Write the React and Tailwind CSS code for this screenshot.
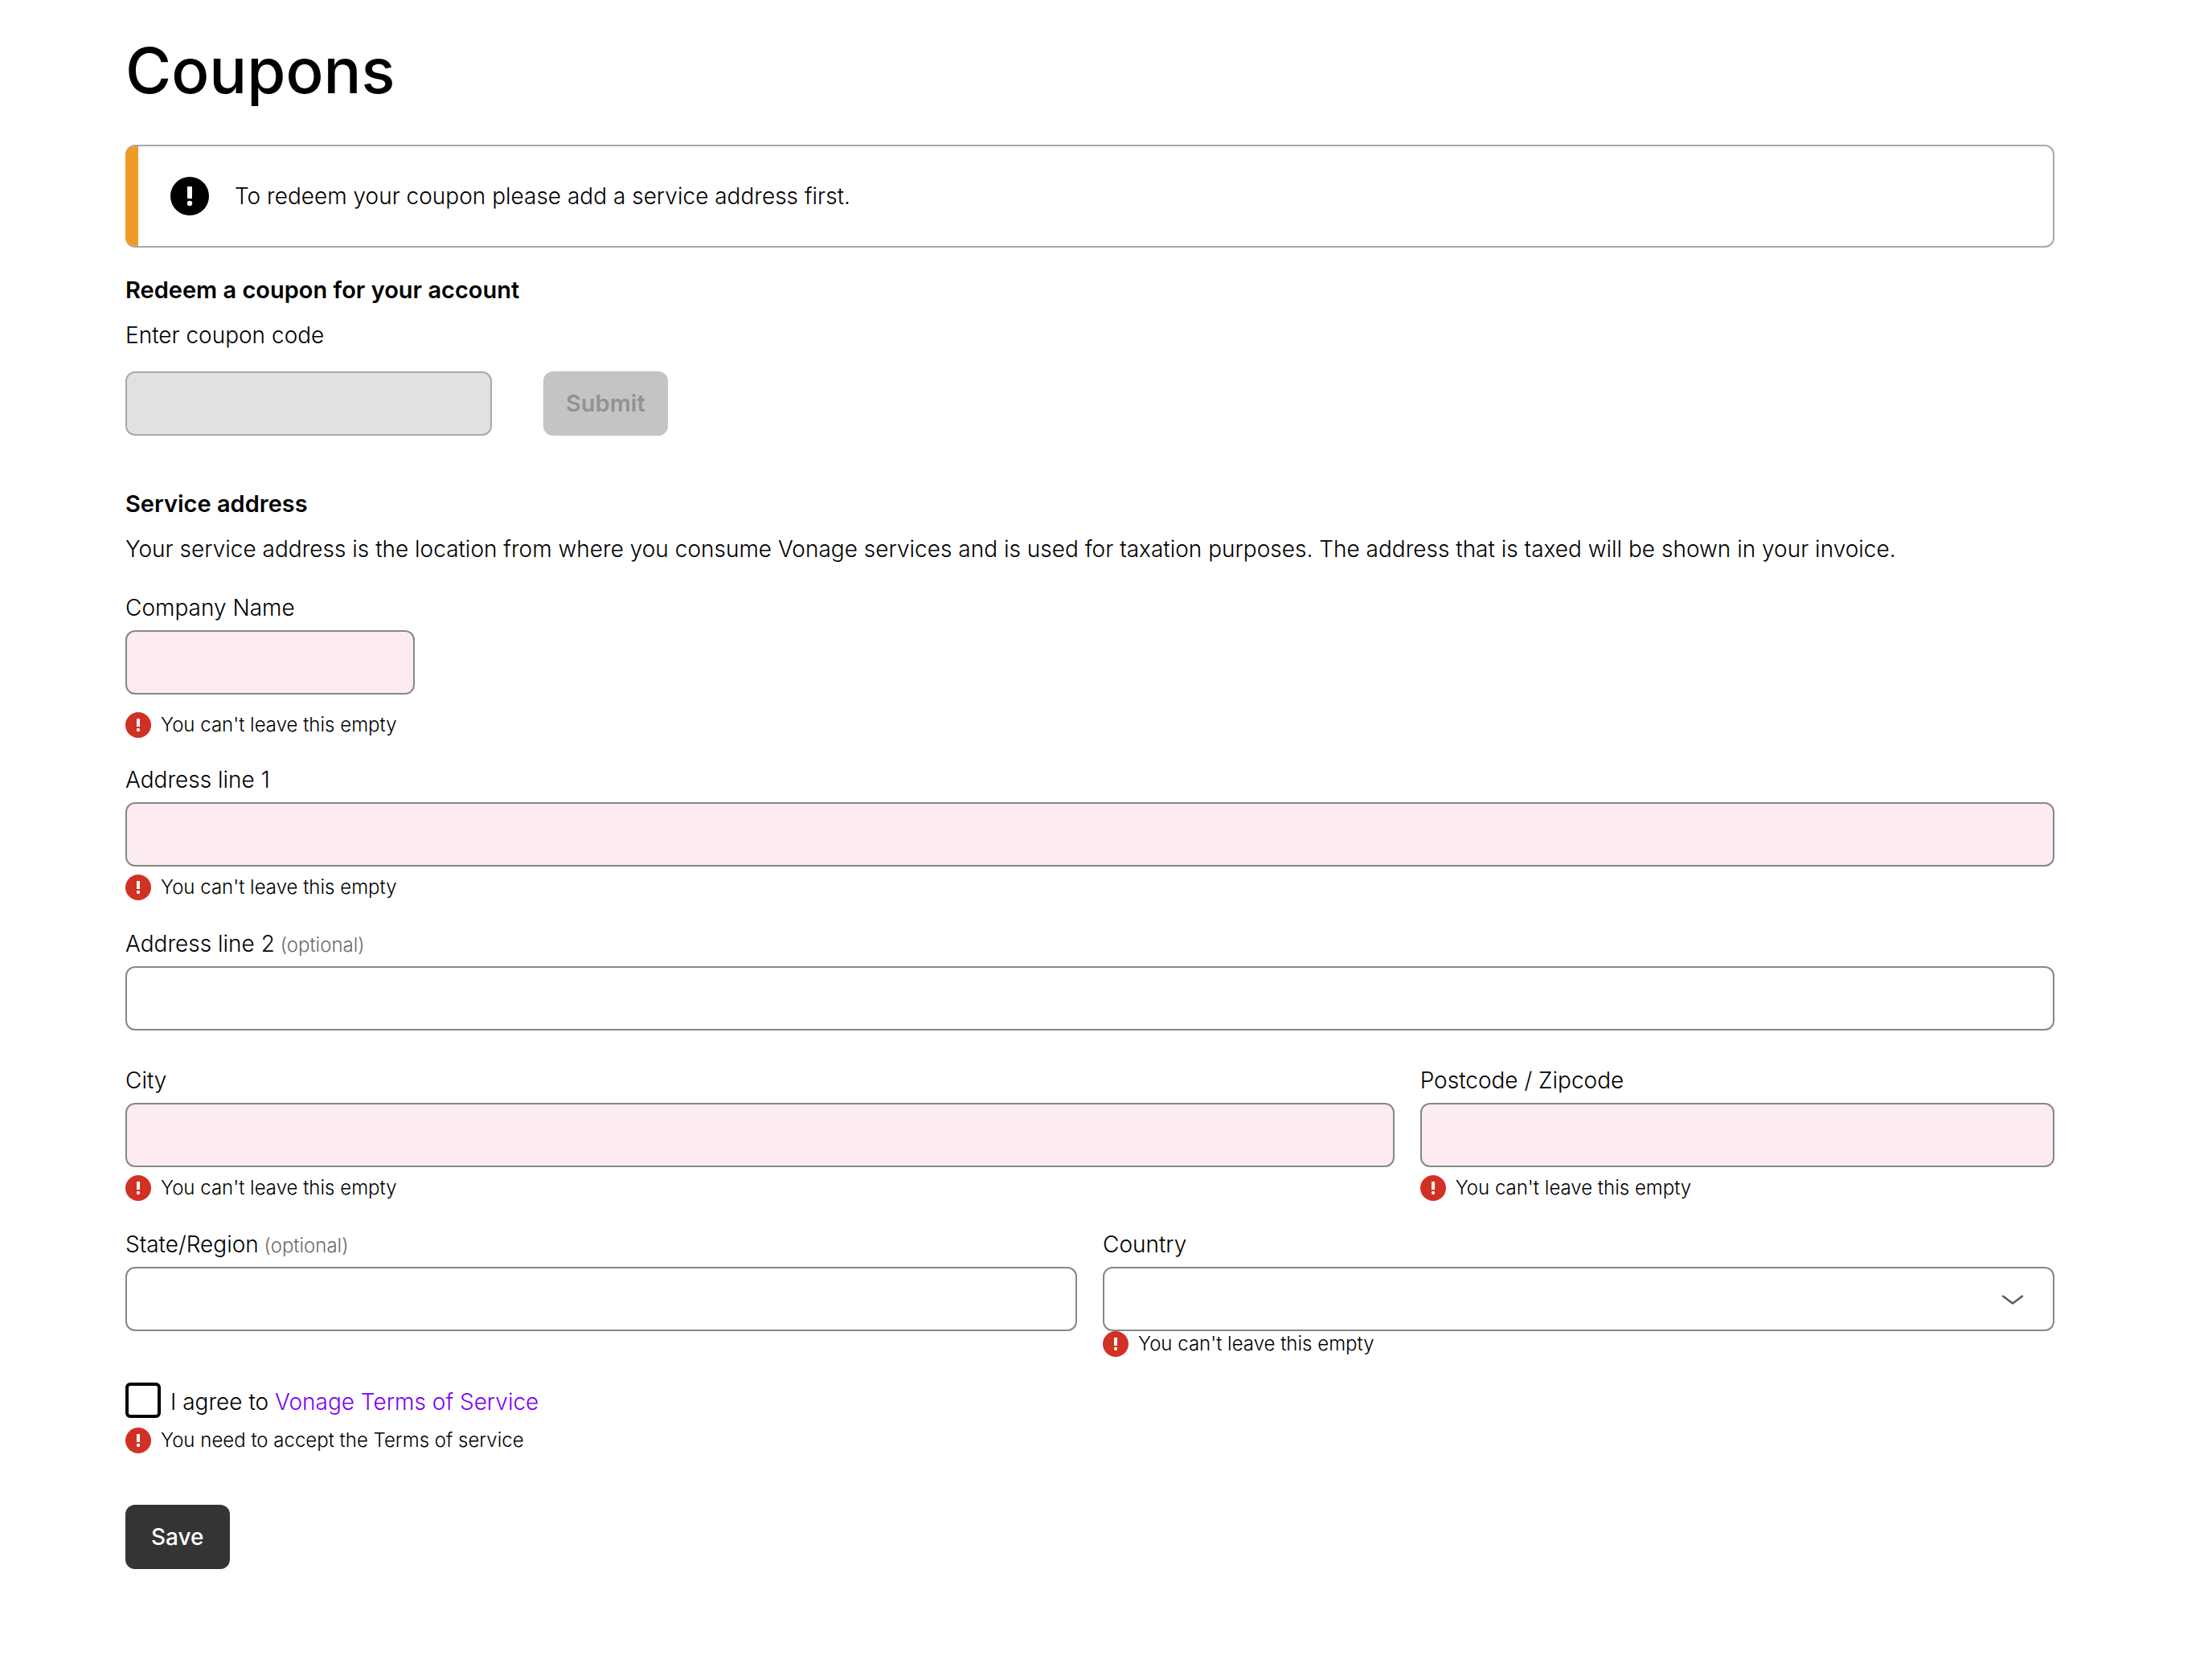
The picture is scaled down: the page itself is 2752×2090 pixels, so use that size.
function AlertIcon({ className }) {
  return (
    <svg viewBox="0 0 48 48" className={className} aria-hidden="true">
      <circle cx="24" cy="24" r="24" fill="currentColor" />
      <rect x="21" y="12" width="6" height="15" fill="#fff" />
      <circle cx="24" cy="33" r="3.2" fill="#fff" />
    </svg>
  );
}

function ErrorMessage({ id, className = "", children }) {
  return (
    <p id={id} className={`flex items-center gap-3 text-[24px] leading-8 ${className}`}>
      <AlertIcon className="size-8 shrink-0 text-[#d13125]" />
      {children}
    </p>
  );
}

const fieldClass =
  "block h-20 rounded-xl border-2 border-[#878787] px-6 text-[28px] outline-none focus:border-black";

function Field({ id, label, optional, error, errorClass = "mt-[10px]", width = "w-full", className = "" }) {
  return (
    <div className={className}>
      <label htmlFor={id} className="mb-2 block">
        {label}
        {optional && <span className="text-[24px] leading-none text-[#6b6b6b]"> (optional)</span>}
      </label>
      <input
        id={id}
        type="text"
        aria-invalid={!!error}
        aria-describedby={error ? `${id}-error` : undefined}
        className={`${fieldClass} ${width} ${error ? "bg-[#fdecef]" : "bg-white"}`}
      />
      {error && (
        <ErrorMessage id={`${id}-error`} className={errorClass}>
          {error}
        </ErrorMessage>
      )}
    </div>
  );
}

const EMPTY = "You can't leave this empty";

export default function App() {
  return (
    <main className="min-h-screen bg-white pt-10 pr-[196px] pb-20 pl-[156px] font-[Inter,sans-serif] text-[28px] leading-10 font-light text-black">
      <h1 className="text-[78px] leading-[96px] font-medium">Coupons</h1>

      <div
        role="alert"
        className="mt-11 flex h-32 overflow-hidden rounded-xl border-y-2 border-r-2 border-[#a9a9a9] bg-white bg-clip-padding"
      >
        <div className="-my-[2px] w-4 shrink-0 bg-[#ee9b28]" />
        <div className="flex items-center gap-8 pl-10">
          <AlertIcon className="size-12 shrink-0" />
          <p>To redeem your coupon please add a service address first.</p>
        </div>
      </div>

      <form className="mt-[33px]" onSubmit={(e) => e.preventDefault()}>
        <h2 className="text-[29px] font-semibold">Redeem a coupon for your account</h2>
        <label htmlFor="coupon" className="mt-4 block">
          Enter coupon code
        </label>
        <div className="mt-[25px] flex gap-16">
          <input
            id="coupon"
            type="text"
            disabled
            className="h-20 w-[456px] rounded-xl border-2 border-[#a9a9a9] bg-[#e1e1e1] px-6"
          />
          <button
            type="submit"
            disabled
            className="h-20 rounded-xl bg-[#c4c4c4] px-7 text-[29px] font-semibold text-[#929292]"
          >
            Submit
          </button>
        </div>
      </form>

      <form className="mt-[65px]" onSubmit={(e) => e.preventDefault()}>
        <h2 className="text-[29px] font-semibold">Service address</h2>
        <p className="mt-4">
          Your service address is the location from where you consume Vonage services and is used for taxation
          purposes. The address that is taxed will be shown in your invoice.
        </p>

        <Field
          id="company"
          label="Company Name"
          error={EMPTY}
          width="w-[360px]"
          errorClass="mt-[22px]"
          className="mt-[33px]"
        />
        <Field id="address1" label="Address line 1" error={EMPTY} className="mt-8" />
        <Field id="address2" label="Address line 2" optional className="mt-[34px]" />

        <div className="mt-[42px] grid grid-cols-[2fr_1fr] gap-8">
          <Field id="city" label="City" error={EMPTY} />
          <Field id="postcode" label="Postcode / Zipcode" error={EMPTY} />
        </div>

        <div className="mt-[34px] grid grid-cols-2 gap-8">
          <Field id="state" label="State/Region" optional />
          <div>
            <label htmlFor="country" className="mb-2 block">
              Country
            </label>
            <div className="relative">
              <select
                id="country"
                defaultValue=""
                aria-invalid="true"
                aria-describedby="country-error"
                className={`${fieldClass} w-full appearance-none bg-white`}
              >
                <option value=""></option>
              </select>
              <svg
                viewBox="0 0 32 32"
                className="pointer-events-none absolute top-6 right-9 size-8"
                fill="none"
                stroke="#5c5c5c"
                strokeWidth="2.6"
                strokeLinecap="round"
                strokeLinejoin="round"
                aria-hidden="true"
              >
                <path d="M4 12.5 L16 21.5 L28 12.5" />
              </svg>
            </div>
            <ErrorMessage id="country-error">{EMPTY}</ErrorMessage>
          </div>
        </div>

        <div className="mt-8 flex items-end gap-3">
          <input
            id="terms"
            type="checkbox"
            aria-describedby="terms-error"
            className="size-11 shrink-0 appearance-none rounded-md border-4 border-black bg-white checked:bg-black"
          />
          <label htmlFor="terms">
            I agree to{" "}
            <a href="#terms" className="text-[#7b00f5]">
              Vonage Terms of Service
            </a>
          </label>
        </div>
        <ErrorMessage id="terms-error" className="mt-3">
          You need to accept the Terms of service
        </ErrorMessage>

        <button type="submit" className="mt-16 h-20 rounded-xl bg-[#343434] px-8 font-medium text-white">
          Save
        </button>
      </form>
    </main>
  );
}
